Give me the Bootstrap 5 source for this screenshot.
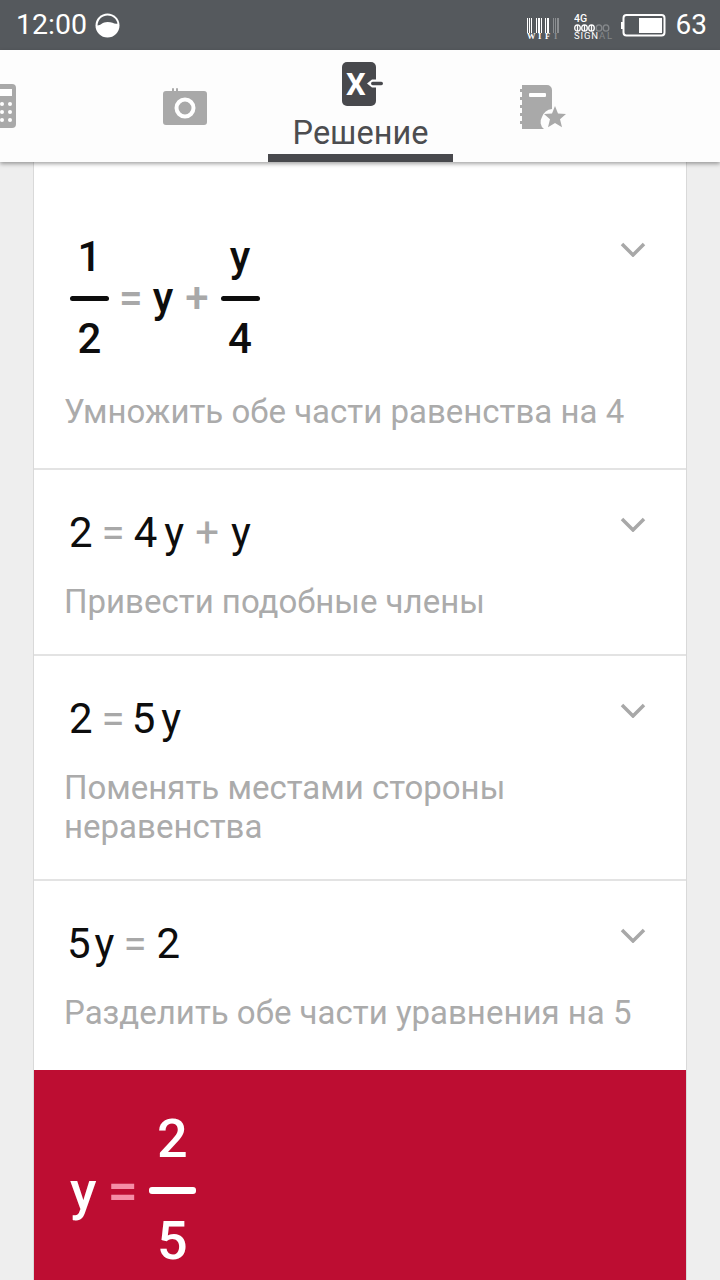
<!DOCTYPE html>
<html lang="ru">
<head>
    <meta charset="UTF-8">
    <meta name="viewport" content="width=device-width, initial-scale=1.0">
    <title>Решение</title>
    <link href="https://cdn.jsdelivr.net/npm/bootstrap@5.3.2/dist/css/bootstrap.min.css" rel="stylesheet">
    <style>
        body {
            width: 720px;
            height: 1280px;
            overflow: hidden;
            background: #eeeeee;
            font-family: Roboto, "Liberation Sans", sans-serif;
        }
        .status-bar {
            height: 50px;
            background: #55595d;
            color: #fff;
            padding: 0 13px 0 16px;
        }
        .status-time { font-size: 28.500px; line-height: 50px; }
        .status-level { font-size: 28px; line-height: 50px; margin-left: 10px; }
        .wifi-icon { margin-top: 5px; }
        .signal-icon { margin-left: 13px; margin-top: 5px; }
        .battery-icon { margin-left: 8px; }
        .tab-bar {
            height: 112px;
            background: #fdfdfd;
            box-shadow: 0 2px 4px rgba(0,0,0,.35);
            position: relative;
            z-index: 2;
        }
        .tab-calc { width: 16px; margin-top: 34px; }
        .tab-camera { margin: 38px 61px 0 147px; }
        .tab-active {
            width: 185px;
            height: 112px;
            border-bottom: 8px solid #48494d;
            text-align: center;
        }
        .tab-active svg { display: block; margin: 12px 0 0 74px; }
        .tab-label {
            font-size: 32.500px;
            line-height: 36px;
            color: #4c4d50;
            margin-top: 8px;
        }
        .tab-notes { margin: 34px 0 0 67px; }
        .steps-card {
            width: 654px;
            margin-left: 33px;
            background: #fff;
            border-left: 1px solid #d9d9d9;
            border-right: 1px solid #d9d9d9;
        }
        .step-row {
            position: relative;
            border-bottom: 2px solid #e3e3e3;
            padding-left: 30px;
            padding-right: 30px;
        }
        .step-chevron { position: absolute; right: 40px; top: 47px; }
        .row-first .step-chevron { top: 80px; }
        .step-hint {
            font-size: 33px;
            line-height: 39px;
            color: #ababab;
        }
        .step-expr {
            font-size: 42px;
            line-height: 46px;
            color: #0d0d0d;
            padding-left: 5px;
            margin-bottom: 26px;
        }
        .op { color: #a8a8a8; }
        .sp-back { margin-left: -2px; }
        .sp-4 { margin-left: 4px; }
        .sp-6 { margin-left: 6px; }
        .sp-7 { margin-left: 7px; }
        .sp-9 { margin-left: 9px; }
        .sp-10 { margin-left: 10px; }
        .sp-11 { margin-left: 11px; }
        .sp-12 { margin-left: 12px; }
        .frac-expr { font-weight: 500; padding-left: 6px; margin-bottom: 30px; }
        .frac-stack { width: 39px; text-align: center; }
        .frac-num, .frac-den { line-height: 46px; height: 46px; }
        .frac-line { height: 5px; border-radius: 3px; background: #0d0d0d; margin: 15.500px 0; }
        .row-first { height: 308px; padding-top: 72px; }
        .row-second { height: 186px; padding-top: 40px; }
        .row-third { height: 225px; padding-top: 40px; }
        .row-fourth { height: 189px; padding-top: 40px; border-bottom: 0; }
        .result-panel {
            height: 210px;
            background: #bd0d32;
            color: #fff;
            padding: 42px 0 0 36px;
            font-size: 54px;
            font-weight: 500;
        }
        .result-panel .op { color: #f58da6; }
        .result-panel .frac-stack { width: 47px; }
        .result-panel .frac-line { background: #fff; margin: 20.500px 0; height: 7px; }
        .result-panel .frac-num, .result-panel .frac-den { height: 54px; line-height: 54px; }
    </style>
</head>
<body>
    <div class="status-bar d-flex align-items-center">
        <span class="status-time">12:00</span>
        <svg class="ms-2" width="25" height="25" viewBox="0 0 25 25"><circle cx="12.500" cy="12.500" r="12" fill="#fff"/><path d="M2.500 12.500c3 0 5-3.500 10-3.500s7 2.500 10 1.500C21.500 5.500 17.500 2.500 12.500 2.500S3 6 2.500 12.500z" fill="#55595d"/></svg>
        <div class="ms-auto d-flex align-items-center">
            <svg class="wifi-icon" width="34" height="30" viewBox="0 0 34 30">
                <g fill="#fff">
                    <rect x="0" y="5" width="1" height="15"/><rect x="2" y="5" width="1" height="15"/><rect x="4" y="5" width="1" height="15"/><rect x="9" y="5" width="1" height="15"/><rect x="11" y="5" width="2" height="15"/><rect x="14" y="5" width="1" height="15"/><rect x="18" y="5" width="1" height="15"/><rect x="20" y="5" width="2" height="15"/>
                </g>
                <g fill="#8b8e91"><rect x="26" y="5" width="1" height="15"/><rect x="28" y="5" width="1" height="15"/><rect x="30" y="5" width="2" height="15"/></g>
                <g font-size="8.500" font-family="Liberation Serif" font-weight="700" fill="#fff"><text x="0" y="26">W</text><text x="11" y="26">I</text><text x="18" y="26">F</text></g>
                <text x="27" y="26" font-size="8.500" font-family="Liberation Serif" font-weight="700" fill="#8b8e91">I</text>
            </svg>
            <svg class="signal-icon" width="39" height="31" viewBox="0 0 39 31">
                <text x="0" y="10" font-size="10.500" font-family="Roboto" font-weight="500" fill="#fff">4G</text>
                <g fill="none" stroke="#fff" stroke-width="1.300"><ellipse cx="3.500" cy="16" rx="2.800" ry="3.200"/><ellipse cx="10.500" cy="16" rx="2.800" ry="3.200"/><ellipse cx="17.500" cy="16" rx="2.800" ry="3.200"/><path d="M3.500 13v6M10.500 13v6M17.500 13v6"/></g>
                <g fill="none" stroke="#85888b" stroke-width="1.300"><ellipse cx="25" cy="16" rx="2.800" ry="3.200"/><ellipse cx="32" cy="16" rx="2.800" ry="3.200"/></g>
                <text x="0" y="27" font-size="9.500" font-family="Roboto" fill="#fff" textLength="24">SIGN</text>
                <text x="25" y="27" font-size="9.500" font-family="Roboto" fill="#85888b" textLength="13">AL</text>
            </svg>
            <svg class="battery-icon" width="45" height="23" viewBox="0 0 45 23">
                <rect x="2.500" y="1" width="41" height="20.500" rx="3" fill="none" stroke="#fff" stroke-width="2"/>
                <rect x="0" y="8" width="2" height="7" fill="#fff"/>
                <rect x="18" y="4" width="23" height="15" fill="#fff"/>
            </svg>
            <span class="status-level">63</span>
        </div>
    </div>

    <div class="tab-bar d-flex align-items-start">
        <svg class="tab-calc" height="44" viewBox="0 0 16 44">
            <path d="M0 0h12a4 4 0 0 1 4 4v36a4 4 0 0 1-4 4H0z" fill="#a9a9a9"/>
            <rect x="0" y="5" width="12" height="7" fill="#fff"/>
            <g fill="#fff"><circle cx="2" cy="20" r="2"/><circle cx="10" cy="20" r="2"/><circle cx="2" cy="28" r="2"/><circle cx="10" cy="28" r="2"/><circle cx="2" cy="36" r="2"/><circle cx="10" cy="36" r="2"/></g>
        </svg>
        <svg class="tab-camera" width="44" height="37" viewBox="0 0 44 37">
            <path d="M3 3h6V1a1 1 0 0 1 2 0v2h2V1a1 1 0 0 1 2 0v2h26a3 3 0 0 1 3 3v28a3 3 0 0 1-3 3H3a3 3 0 0 1-3-3V6a3 3 0 0 1 3-3z" fill="#a9a9a9"/>
            <circle cx="22" cy="20" r="8.500" fill="none" stroke="#fff" stroke-width="4"/>
        </svg>
        <div class="tab-active">
            <svg width="42" height="45" viewBox="0 0 42 45">
                <rect x="0" y="0" width="34" height="44" rx="5" fill="#48494d"/>
                <text x="4" y="33" font-size="31" font-weight="700" font-family="Roboto" fill="#fff">X</text>
                <path d="M25 21.500L30 17.500h4v8h-4z" fill="#fff"/>
                <rect x="29" y="19.750" width="12" height="3.500" rx="1.700" fill="#48494d"/>
            </svg>
            <div class="tab-label">Решение</div>
        </div>
        <svg class="tab-notes" width="46" height="46" viewBox="0 0 46 46">
            <path d="M2 1h25a5 5 0 0 1 5 5v19a12 12 0 0 0-10 8 9 9 0 0 0 2 12H2v-5H0v-3h2v-5H0v-3h2v-5H0v-3h2v-5H0v-3h2V8H0V5h2z" fill="#a9a9a9"/>
            <rect x="9" y="9" width="17" height="4" rx="1" fill="#fff"/>
            <path d="M35 22l3 7.500 8 .5-6 5.200 2 8-7-4.300-7 4.300 2-8-6-5.200 8-.5z" fill="#a9a9a9"/>
        </svg>
    </div>

    <div class="steps-card">
        <div class="step-row row-first">
            <svg class="step-chevron" width="26" height="15" viewBox="0 0 26 15"><path d="M2 2l11 11L24 2" fill="none" stroke="#a8a8a8" stroke-width="3.500"/></svg>
            <div class="step-expr frac-expr d-flex align-items-center">
                <div class="frac-stack"><div class="frac-num">1</div><div class="frac-line"></div><div class="frac-den">2</div></div>
                <span class="op sp-10">=</span><span class="sp-10">y</span><span class="op sp-12">+</span>
                <div class="frac-stack sp-12"><div class="frac-num">y</div><div class="frac-line"></div><div class="frac-den">4</div></div>
            </div>
            <div class="step-hint">Умножить обе части равенства на 4</div>
        </div>
        <div class="step-row row-second">
            <svg class="step-chevron" width="26" height="15" viewBox="0 0 26 15"><path d="M2 2l11 11L24 2" fill="none" stroke="#a8a8a8" stroke-width="3.500"/></svg>
            <div class="step-expr d-flex"><span>2</span><span class="op sp-9">=</span><span class="sp-9">4</span><span class="sp-7">y</span><span class="op sp-11">+</span><span class="sp-12">y</span></div>
            <div class="step-hint">Привести подобные члены</div>
        </div>
        <div class="step-row row-third">
            <svg class="step-chevron" width="26" height="15" viewBox="0 0 26 15"><path d="M2 2l11 11L24 2" fill="none" stroke="#a8a8a8" stroke-width="3.500"/></svg>
            <div class="step-expr d-flex"><span>2</span><span class="op sp-9">=</span><span class="sp-7">5</span><span class="sp-6">y</span></div>
            <div class="step-hint">Поменять местами стороны неравенства</div>
        </div>
        <div class="step-row row-fourth">
            <svg class="step-chevron" width="26" height="15" viewBox="0 0 26 15"><path d="M2 2l11 11L24 2" fill="none" stroke="#a8a8a8" stroke-width="3.500"/></svg>
            <div class="step-expr d-flex"><span class="sp-back">5</span><span class="sp-4">y</span><span class="op sp-9">=</span><span class="sp-10">2</span></div>
            <div class="step-hint">Разделить обе части уравнения на 5</div>
        </div>
        <div class="result-panel">
            <div class="d-flex align-items-center">
                <span>y</span><span class="op sp-11">=</span>
                <div class="frac-stack sp-11"><div class="frac-num">2</div><div class="frac-line"></div><div class="frac-den">5</div></div>
            </div>
        </div>
    </div>
</body>
</html>
